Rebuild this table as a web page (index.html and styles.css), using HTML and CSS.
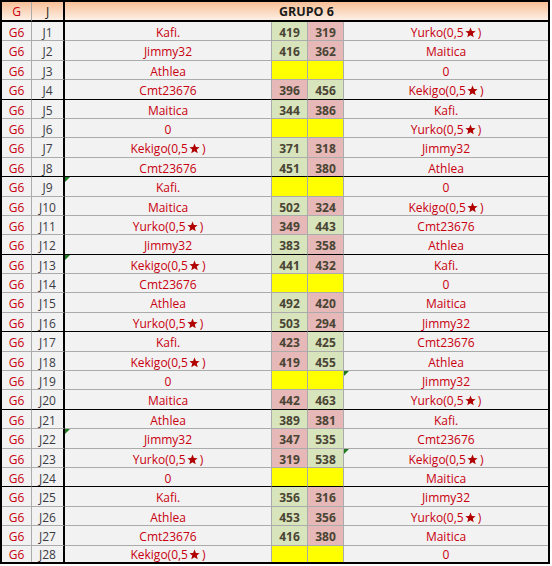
FILE: index.html
```html
<!DOCTYPE html>
<html lang="es">
<head>
<meta charset="utf-8">
<title>Grupo 6</title>
<link rel="stylesheet" href="styles.css">
</head>
<body>
<svg width="0" height="0" class="defs" aria-hidden="true">
  <defs>
    <symbol id="star" viewBox="0 0 24 24">
      <polygon points="12,1 15.1,8.6 23.2,9.1 17,14.3 19,22.4 12,18 5,22.4 7,14.3 0.8,9.1 8.9,8.6"/>
    </symbol>
  </defs>
</svg>
<div class="sheet">
  <div class="row hd"><div class="c g">G</div><div class="c j">J</div><div class="c title">GRUPO 6</div></div>

  <div class="row"><div class="c g">G6</div><div class="c j">J1</div><div class="c n">Kafi.</div><div class="c s w">419</div><div class="c s l">319</div><div class="c n rn">Yurko(0,5<svg class="st"><use href="#star"/></svg>)</div></div>
  <div class="row"><div class="c g">G6</div><div class="c j">J2</div><div class="c n">Jimmy32</div><div class="c s w">416</div><div class="c s l">362</div><div class="c n rn">Maitica</div></div>
  <div class="row"><div class="c g">G6</div><div class="c j">J3</div><div class="c n">Athlea</div><div class="c s y"></div><div class="c s y"></div><div class="c n rn">0</div></div>
  <div class="row sep"><div class="c g">G6</div><div class="c j">J4</div><div class="c n">Cmt23676</div><div class="c s l">396</div><div class="c s w">456</div><div class="c n rn">Kekigo(0,5<svg class="st"><use href="#star"/></svg>)</div></div>

  <div class="row"><div class="c g">G6</div><div class="c j">J5</div><div class="c n">Maitica</div><div class="c s w">344</div><div class="c s l">386</div><div class="c n rn">Kafi.</div></div>
  <div class="row"><div class="c g">G6</div><div class="c j">J6</div><div class="c n">0</div><div class="c s y"></div><div class="c s y"></div><div class="c n rn">Yurko(0,5<svg class="st"><use href="#star"/></svg>)</div></div>
  <div class="row"><div class="c g">G6</div><div class="c j">J7</div><div class="c n">Kekigo(0,5<svg class="st"><use href="#star"/></svg>)</div><div class="c s w">371</div><div class="c s l">318</div><div class="c n rn">Jimmy32</div></div>
  <div class="row sep"><div class="c g">G6</div><div class="c j">J8</div><div class="c n">Cmt23676</div><div class="c s w">451</div><div class="c s l">380</div><div class="c n rn">Athlea</div></div>

  <div class="row"><div class="c g">G6</div><div class="c j">J9</div><div class="c n m">Kafi.</div><div class="c s y"></div><div class="c s y"></div><div class="c n rn">0</div></div>
  <div class="row"><div class="c g">G6</div><div class="c j">J10</div><div class="c n">Maitica</div><div class="c s w">502</div><div class="c s l">324</div><div class="c n rn">Kekigo(0,5<svg class="st"><use href="#star"/></svg>)</div></div>
  <div class="row"><div class="c g">G6</div><div class="c j">J11</div><div class="c n">Yurko(0,5<svg class="st"><use href="#star"/></svg>)</div><div class="c s l">349</div><div class="c s w">443</div><div class="c n rn">Cmt23676</div></div>
  <div class="row sep"><div class="c g">G6</div><div class="c j">J12</div><div class="c n">Jimmy32</div><div class="c s w">383</div><div class="c s l">358</div><div class="c n rn">Athlea</div></div>

  <div class="row"><div class="c g">G6</div><div class="c j">J13</div><div class="c n m">Kekigo(0,5<svg class="st"><use href="#star"/></svg>)</div><div class="c s w">441</div><div class="c s l">432</div><div class="c n rn">Kafi.</div></div>
  <div class="row"><div class="c g">G6</div><div class="c j">J14</div><div class="c n">Cmt23676</div><div class="c s y"></div><div class="c s y"></div><div class="c n rn">0</div></div>
  <div class="row"><div class="c g">G6</div><div class="c j">J15</div><div class="c n">Athlea</div><div class="c s w">492</div><div class="c s l">420</div><div class="c n rn">Maitica</div></div>
  <div class="row sep"><div class="c g">G6</div><div class="c j">J16</div><div class="c n">Yurko(0,5<svg class="st"><use href="#star"/></svg>)</div><div class="c s w">503</div><div class="c s l">294</div><div class="c n rn">Jimmy32</div></div>

  <div class="row"><div class="c g">G6</div><div class="c j">J17</div><div class="c n">Kafi.</div><div class="c s l">423</div><div class="c s w">425</div><div class="c n rn">Cmt23676</div></div>
  <div class="row"><div class="c g">G6</div><div class="c j">J18</div><div class="c n">Kekigo(0,5<svg class="st"><use href="#star"/></svg>)</div><div class="c s l">419</div><div class="c s w">455</div><div class="c n rn">Athlea</div></div>
  <div class="row"><div class="c g">G6</div><div class="c j">J19</div><div class="c n">0</div><div class="c s y"></div><div class="c s y"></div><div class="c n rn m">Jimmy32</div></div>
  <div class="row sep"><div class="c g">G6</div><div class="c j">J20</div><div class="c n">Maitica</div><div class="c s l">442</div><div class="c s w">463</div><div class="c n rn">Yurko(0,5<svg class="st"><use href="#star"/></svg>)</div></div>

  <div class="row"><div class="c g">G6</div><div class="c j">J21</div><div class="c n">Athlea</div><div class="c s w">389</div><div class="c s l">381</div><div class="c n rn">Kafi.</div></div>
  <div class="row"><div class="c g">G6</div><div class="c j">J22</div><div class="c n m">Jimmy32</div><div class="c s l">347</div><div class="c s w">535</div><div class="c n rn">Cmt23676</div></div>
  <div class="row"><div class="c g">G6</div><div class="c j">J23</div><div class="c n">Yurko(0,5<svg class="st"><use href="#star"/></svg>)</div><div class="c s l">319</div><div class="c s w">538</div><div class="c n rn m">Kekigo(0,5<svg class="st"><use href="#star"/></svg>)</div></div>
  <div class="row sep"><div class="c g">G6</div><div class="c j">J24</div><div class="c n">0</div><div class="c s y"></div><div class="c s y"></div><div class="c n rn">Maitica</div></div>

  <div class="row"><div class="c g">G6</div><div class="c j">J25</div><div class="c n">Kafi.</div><div class="c s w">356</div><div class="c s l">316</div><div class="c n rn">Jimmy32</div></div>
  <div class="row"><div class="c g">G6</div><div class="c j">J26</div><div class="c n">Athlea</div><div class="c s w">453</div><div class="c s l">356</div><div class="c n rn">Yurko(0,5<svg class="st"><use href="#star"/></svg>)</div></div>
  <div class="row"><div class="c g">G6</div><div class="c j">J27</div><div class="c n">Cmt23676</div><div class="c s w">416</div><div class="c s l">380</div><div class="c n rn">Maitica</div></div>
  <div class="row last"><div class="c g">G6</div><div class="c j">J28</div><div class="c n">Kekigo(0,5<svg class="st"><use href="#star"/></svg>)</div><div class="c s y"></div><div class="c s y"></div><div class="c n rn">0</div></div>
</div>
</body>
</html>
```

FILE: styles.css
```css
html, body {
  margin: 0;
  padding: 0;
  background: #ffffff;
}

.defs {
  position: absolute;
  width: 0;
  height: 0;
  overflow: hidden;
}

.sheet {
  display: grid;
  width: 546px;
  grid-template-columns: 30px 33px 207px 36px 36px 204px;
  grid-template-rows: 20px repeat(27, 19.4px) 16.2px;
  border: 2px solid #000;
  font-family: "Open Sans", "Noto Sans", sans-serif;
  font-size: 12px;
}

.row {
  display: contents;
}

.c {
  box-sizing: border-box;
  position: relative;
  display: block;
  text-align: center;
  padding-top: 3px;
  line-height: 16px;
  white-space: nowrap;
  background: #f2f2f2;
  color: #c8000f;
  border-right: 1px solid #ababab;
  border-bottom: 1px solid #ababab;
}

.last > .c {
  border-bottom: 0;
  padding-top: 1px;
}

.j {
  color: #3a3a44;
  border-right: 2px solid #000;
}

.rn {
  border-right: 0;
}

.s {
  color: #4a4434;
  font-weight: 700;
}

.w {
  background: #d8e4bc;
}

.l {
  background: #e6b8b7;
}

.y {
  background: #ffff00;
}

.st {
  display: inline-block;
  width: 11px;
  height: 11px;
  margin: 0 2px 0 1px;
  vertical-align: -1px;
  fill: #b00000;
}

.m::before {
  content: "";
  position: absolute;
  left: 0;
  top: 0;
  border-top: 5px solid #1f7a1f;
  border-right: 5px solid transparent;
}

.sep > .c {
  border-bottom-color: #000;
}

.hd > .c {
  background: linear-gradient(#f7bf96, #fdf0e6);
  border-bottom: 2px solid #000;
  padding-top: 2px;
}

.hd > .g {
  color: #c8000f;
}

.hd > .j {
  color: #1a1a1a;
}

.hd > .title {
  grid-column: span 4;
  border-right: 0;
  color: #1a1a1a;
  font-weight: 700;
  font-size: 12.5px;
}
```
